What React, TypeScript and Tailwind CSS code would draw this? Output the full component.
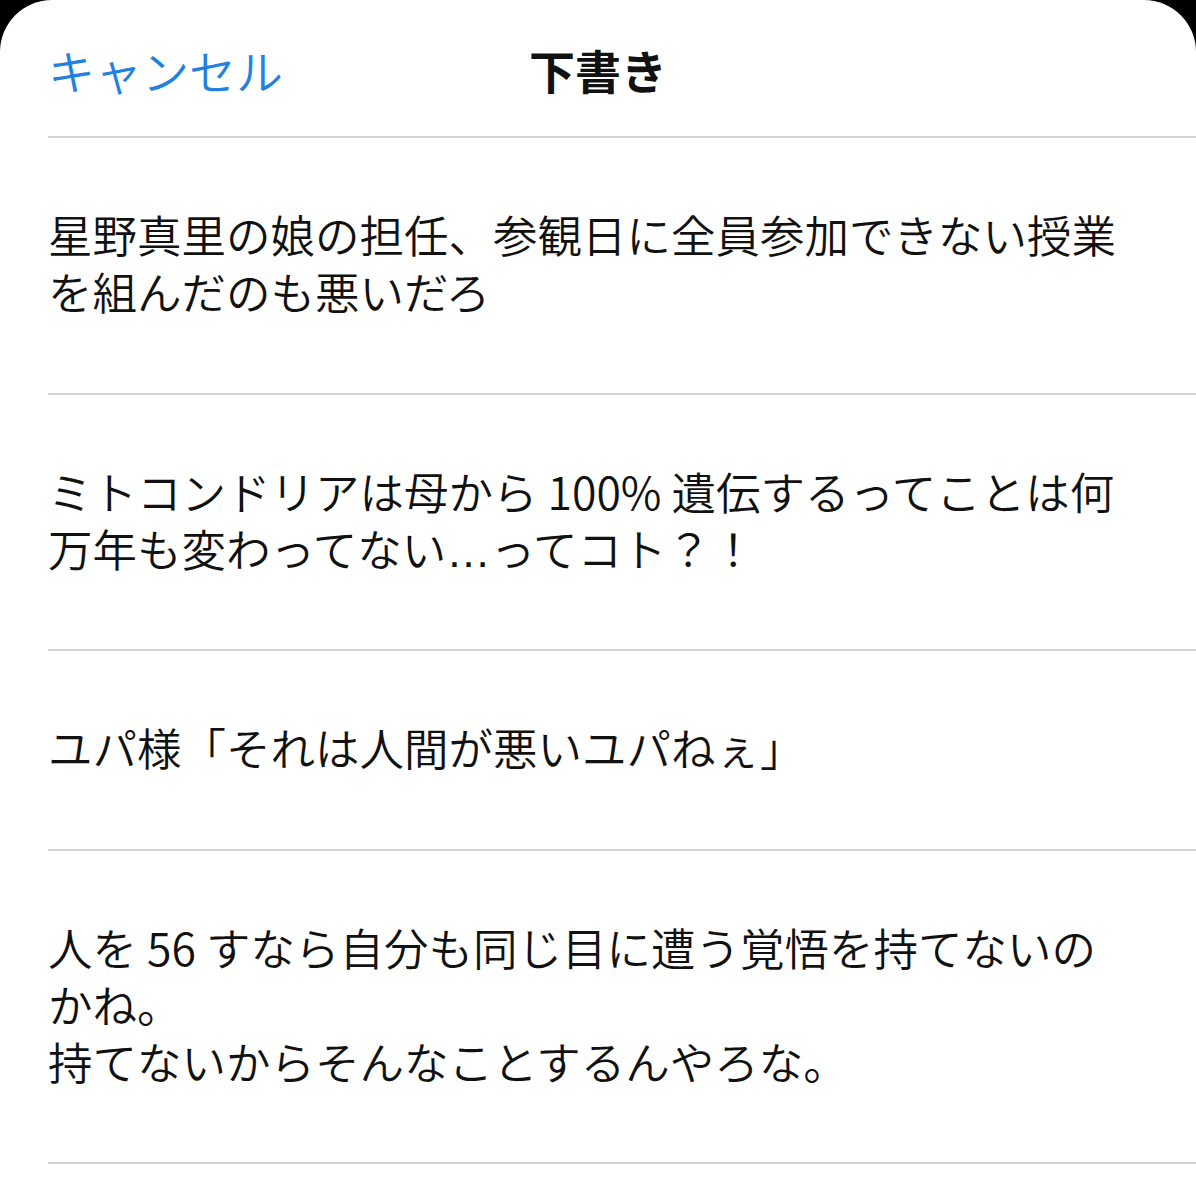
import React from "react";

const Num = ({ children }: { children: React.ReactNode }) => (
  <span className="px-[10px]">{children}</span>
);
const Dots = () => (
  <span className="leading-none" style={{ fontFamily: '"Liberation Sans", sans-serif' }}>
    …
  </span>
);

const drafts: React.ReactNode[] = [
  <>
    星野真里の娘の担任、参観日に全員参加できない授業
    <br />
    を組んだのも悪いだろ
  </>,
  <>
    ミトコンドリアは母から<Num>100%</Num>遺伝するってことは何
    <br />
    万年も変わってない<Dots />ってコト？！
  </>,
  <>ユパ様「それは人間が悪いユパねぇ」</>,
  <>
    人を<Num>56</Num>すなら自分も同じ目に遭う覚悟を持てないの
    <br />
    かね。
    <br />
    持てないからそんなことするんやろな。
  </>,
];

export default function App() {
  return (
    <div
      className="min-h-[1200px] bg-black"
      style={{ fontFamily: '"Noto Sans CJK JP", "Noto Sans", sans-serif' }}
    >
      <div className="min-h-[1200px] bg-white rounded-t-[52px] overflow-hidden">
        {/* Header */}
        <header className="grid grid-cols-3 items-center h-[136px] pt-[2px]">
          <button className="justify-self-start pl-[48px] text-[47px] font-[350] text-[#1f82e0] leading-none">
            キャンセル
          </button>
          <h1 className="justify-self-center text-[46px] font-bold text-[#111] leading-none">
            下書き
          </h1>
          <div />
        </header>
        <div className="ml-[48px] h-[2px] bg-[#d4d4d4]" />

        {/* Draft list */}
        <ul className="ml-[48px]">
          {drafts.map((d, i) => (
            <li
              key={i}
              className="pt-[67px] pb-[73.5px] border-b-2 border-[#d4d4d4] text-[44.5px] font-[350] leading-[57px] text-[#111] whitespace-nowrap"
            >
              {d}
            </li>
          ))}
        </ul>
      </div>
    </div>
  );
}
